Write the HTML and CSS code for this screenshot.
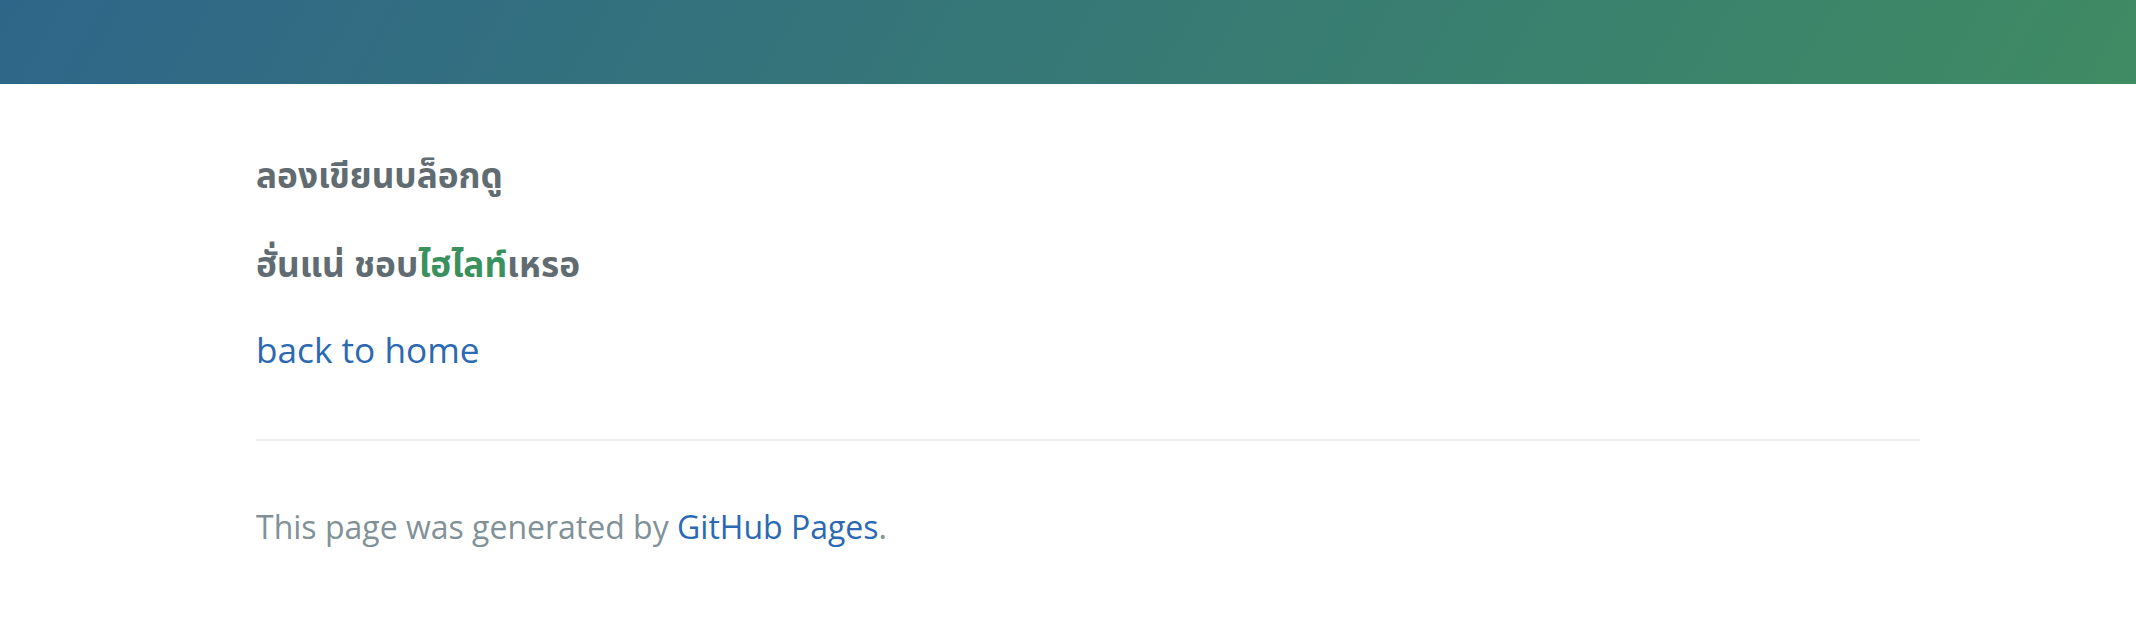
FILE: index.html
```html
<!DOCTYPE html>
<html lang="th">
<head>
<meta charset="utf-8">
<title>ลองเขียนบล็อกดู</title>
<link rel="stylesheet" href="styles.css">
</head>
<body>
<header class="page-header"></header>
<main class="main-content">
  <p class="strong first">ลองเขียนบล็อกดู</p>
  <p class="strong second">ฮั่นแน่ ชอบ<span class="hl">ไฮไลท์</span>เหรอ</p>
  <p><a href="#">back to home</a></p>
  <footer class="site-footer">
    <span class="credits">This page was generated by <a href="#">GitHub Pages</a>.</span>
  </footer>
</main>
</body>
</html>
```

FILE: styles.css
```css
* { box-sizing: border-box; }
html, body { margin: 0; padding: 0; }
body {
  font-family: "Open Sans", "Noto Sans Thai", "Noto Sans", sans-serif;
  color: #606c71;
  background: #fff;
}
.page-header {
  height: 84px;
  background-color: #3a8a66;
  background-image: linear-gradient(120deg, #2e6689, #3f8b63);
}
.main-content {
  margin-left: 256px;
  width: 1664px;
  padding: 64px 0;
  font-size: 35.2px;
  line-height: 1.5;
}
.main-content p {
  margin: 0 0 32px;
}
.main-content p.first { margin-bottom: 36px; }
.main-content p.second { margin-bottom: 33px; }
.strong { font-weight: bold; }
.hl { color: #3a915e; }
a { color: #2b69b3; text-decoration: none; }
.site-footer {
  margin-top: 64px;
  padding-top: 62px;
  border-top: 2px solid #eff0f1;
  font-size: 32px;
  color: #819198;
}
```
